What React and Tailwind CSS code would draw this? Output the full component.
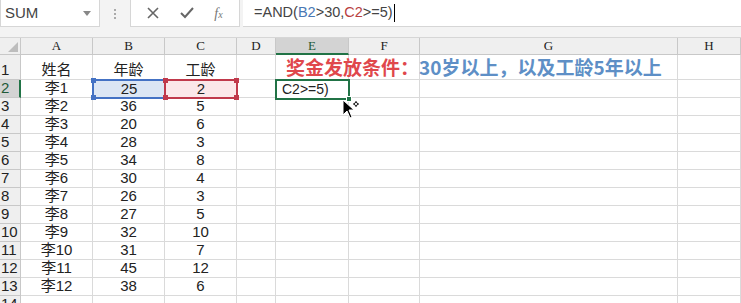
import React from "react";

const cols = [
  { id: "A", w: "w-[72px]" },
  { id: "B", w: "w-[72px]" },
  { id: "C", w: "w-[72px]" },
  { id: "D", w: "w-[39px]" },
  { id: "E", w: "w-[73px]" },
  { id: "F", w: "w-[71px]" },
  { id: "G", w: "w-[258px]" },
  { id: "H", w: "w-[63px]" },
];

const rows = [
  ["姓名", "年龄", "工龄"],
  ["李1", "25", "2"],
  ["李2", "36", "5"],
  ["李3", "20", "6"],
  ["李4", "28", "3"],
  ["李5", "34", "8"],
  ["李6", "30", "4"],
  ["李7", "26", "3"],
  ["李8", "27", "5"],
  ["李9", "32", "10"],
  ["李10", "31", "7"],
  ["李11", "45", "12"],
  ["李12", "38", "6"],
  ["", "", ""],
];

const cellFont = { fontFamily: '"Liberation Sans", "Noto Sans CJK SC", sans-serif' };

function Handle({ color, pos }) {
  return <span className={`absolute w-[5px] h-[5px] ${color} ${pos}`} />;
}

export default function App() {
  return (
    <div className="relative w-[741px] h-[303px] overflow-hidden bg-white text-[#222]" style={cellFont}>
      {/* formula bar */}
      <div className="h-[38px] bg-[#f3f3f3] flex items-start border-b border-[#d6d6d6]">
        <div className="w-[100px] shrink-0 h-[27px] bg-white border border-[#d6d6d6] border-t-0 flex items-center justify-between pl-[4px] pr-[8px]">
          <span className="text-[15px] text-[#444]">SUM</span>
          <svg width="8" height="5" viewBox="0 0 8 5"><path d="M0 0h8L4 5z" fill="#888" /></svg>
        </div>
        <div className="w-[30px] shrink-0 h-[27px] flex flex-col items-center justify-center gap-[2px]">
          <span className="w-[2px] h-[2px] bg-[#aaa]" />
          <span className="w-[2px] h-[2px] bg-[#aaa]" />
          <span className="w-[2px] h-[2px] bg-[#aaa]" />
        </div>
        <div className="w-[110px] shrink-0 h-[27px] bg-white border border-[#d6d6d6] border-t-0 flex items-center justify-around px-[6px]">
          <svg width="12" height="12" viewBox="0 0 12 12"><path d="M1 1l10 10M11 1L1 11" stroke="#666" strokeWidth="1.6" /></svg>
          <svg width="14" height="12" viewBox="0 0 14 12"><path d="M1 6l4 4 8-9" stroke="#666" strokeWidth="2" fill="none" /></svg>
          <span className="text-[14px] italic text-[#777]" style={{ fontFamily: '"Liberation Serif", serif' }}>f<span className="text-[10px]">x</span></span>
        </div>
        <div className="flex-1 h-[27px] ml-[3px] bg-white border-b border-[#d6d6d6] flex items-center pl-[11px] text-[14.5px] text-[#444]">
          <span>=AND(</span>
          <span className="text-[#4a78b5]">B2</span>
          <span>&gt;30,</span>
          <span className="text-[#b8413f]">C2</span>
          <span>&gt;=5)</span>
          <span className="w-px h-[18px] bg-black ml-px" />
        </div>
      </div>

      {/* column headers */}
      <div className="flex h-[17px]">
        <div className="w-[21px] shrink-0 bg-[#efefef] border-r border-b border-[#c8c8c8] relative">
          <svg className="absolute right-[2px] bottom-[2px]" width="10" height="10" viewBox="0 0 10 10"><path d="M10 0v10H0z" fill="#bdbdbd" /></svg>
        </div>
        {cols.map((c) => (
          <div
            key={c.id}
            className={`${c.w} shrink-0 flex items-center justify-center text-[13px] border-r border-[#c8c8c8] ${
              c.id === "E" ? "bg-[#d3d3d3] border-b-2 border-b-[#217346] text-[#1e5a38]" : "bg-[#efefef] border-b border-b-[#c8c8c8]"
            }`}
            style={{ fontFamily: '"Liberation Serif", serif' }}
          >
            {c.id}
          </div>
        ))}
      </div>

      {/* rows */}
      {rows.map((r, i) => {
        const n = i + 1;
        const h = n === 1 ? "h-[25px]" : "h-[18px]";
        return (
          <div key={n} className={`flex ${h}`}>
            <div
              className={`w-[21px] shrink-0 flex items-end pl-[1px] text-[15px] leading-[18px] border-b border-[#c8c8c8] ${
                n === 2 ? "bg-[#d3d3d3] border-r-2 border-r-[#217346] text-[#1e5a38]" : "bg-[#efefef] border-r border-r-[#c8c8c8]"
              }`}
            >
              {n}
            </div>
            {cols.map((c, j) => (
              <div
                key={c.id}
                className={`${c.w} shrink-0 relative flex items-end justify-center text-[15px] leading-[18px] border-r border-b border-[#dadada]`}
              >
                {j < 3 ? r[j] : null}
                {n === 1 && c.id === "E" && (
                  <span
                    className="absolute left-[10px] bottom-[0px] whitespace-nowrap text-[19px] font-bold leading-[24px] z-10"
                    style={{ fontFamily: '"Noto Sans CJK SC", serif' }}
                  >
                    <span className="text-[#e0474c]">奖金发放条件：</span>
                    <span className="text-[#5e8fc6]">30岁以上，以及工龄5年以上</span>
                  </span>
                )}
              </div>
            ))}
          </div>
        );
      })}

      {/* B2 reference highlight */}
      <div className="absolute left-[92px] top-[79px] w-[74px] h-[20px] border-2 border-[#4472c4] bg-[#dce6f4] flex items-center justify-center text-[15px] leading-[18px]">
        25
        <Handle color="bg-[#4472c4]" pos="-left-[3px] -top-[3px]" />
        <Handle color="bg-[#4472c4]" pos="-left-[3px] -bottom-[3px]" />
      </div>
      {/* C2 reference highlight */}
      <div className="absolute left-[164px] top-[79px] w-[74px] h-[20px] border-2 border-[#c0394b] bg-[#fbe7e9] flex items-center justify-center text-[15px] leading-[18px]">
        2
        <Handle color="bg-[#c0394b]" pos="-left-[3px] -top-[3px]" />
        <Handle color="bg-[#c0394b]" pos="-right-[3px] -top-[3px]" />
        <Handle color="bg-[#c0394b]" pos="-left-[3px] -bottom-[3px]" />
        <Handle color="bg-[#c0394b]" pos="-right-[3px] -bottom-[3px]" />
      </div>
      {/* active cell E2 */}
      <div className="absolute left-[275px] top-[79px] w-[75px] h-[21px] border-2 border-[#217346] bg-white flex items-center pl-[5px] text-[14px]">
        C2&gt;=5)
        <span className="absolute -right-[4px] -bottom-[4px] w-[6px] h-[6px] bg-[#217346] border border-white" />
      </div>
      {/* mouse cursor */}
      <svg className="absolute left-[342px] top-[99px]" width="22" height="22" viewBox="0 0 22 22">
        <path d="M1 1v15l4-4 3 7 2-1-3-7h5z" fill="#000" stroke="#fff" strokeWidth="1" />
        <path d="M14 2v6M11 5h6" stroke="#000" strokeWidth="1" />
        <circle cx="14" cy="5" r="1.6" fill="#fff" stroke="#000" strokeWidth="0.8" />
      </svg>
    </div>
  );
}
